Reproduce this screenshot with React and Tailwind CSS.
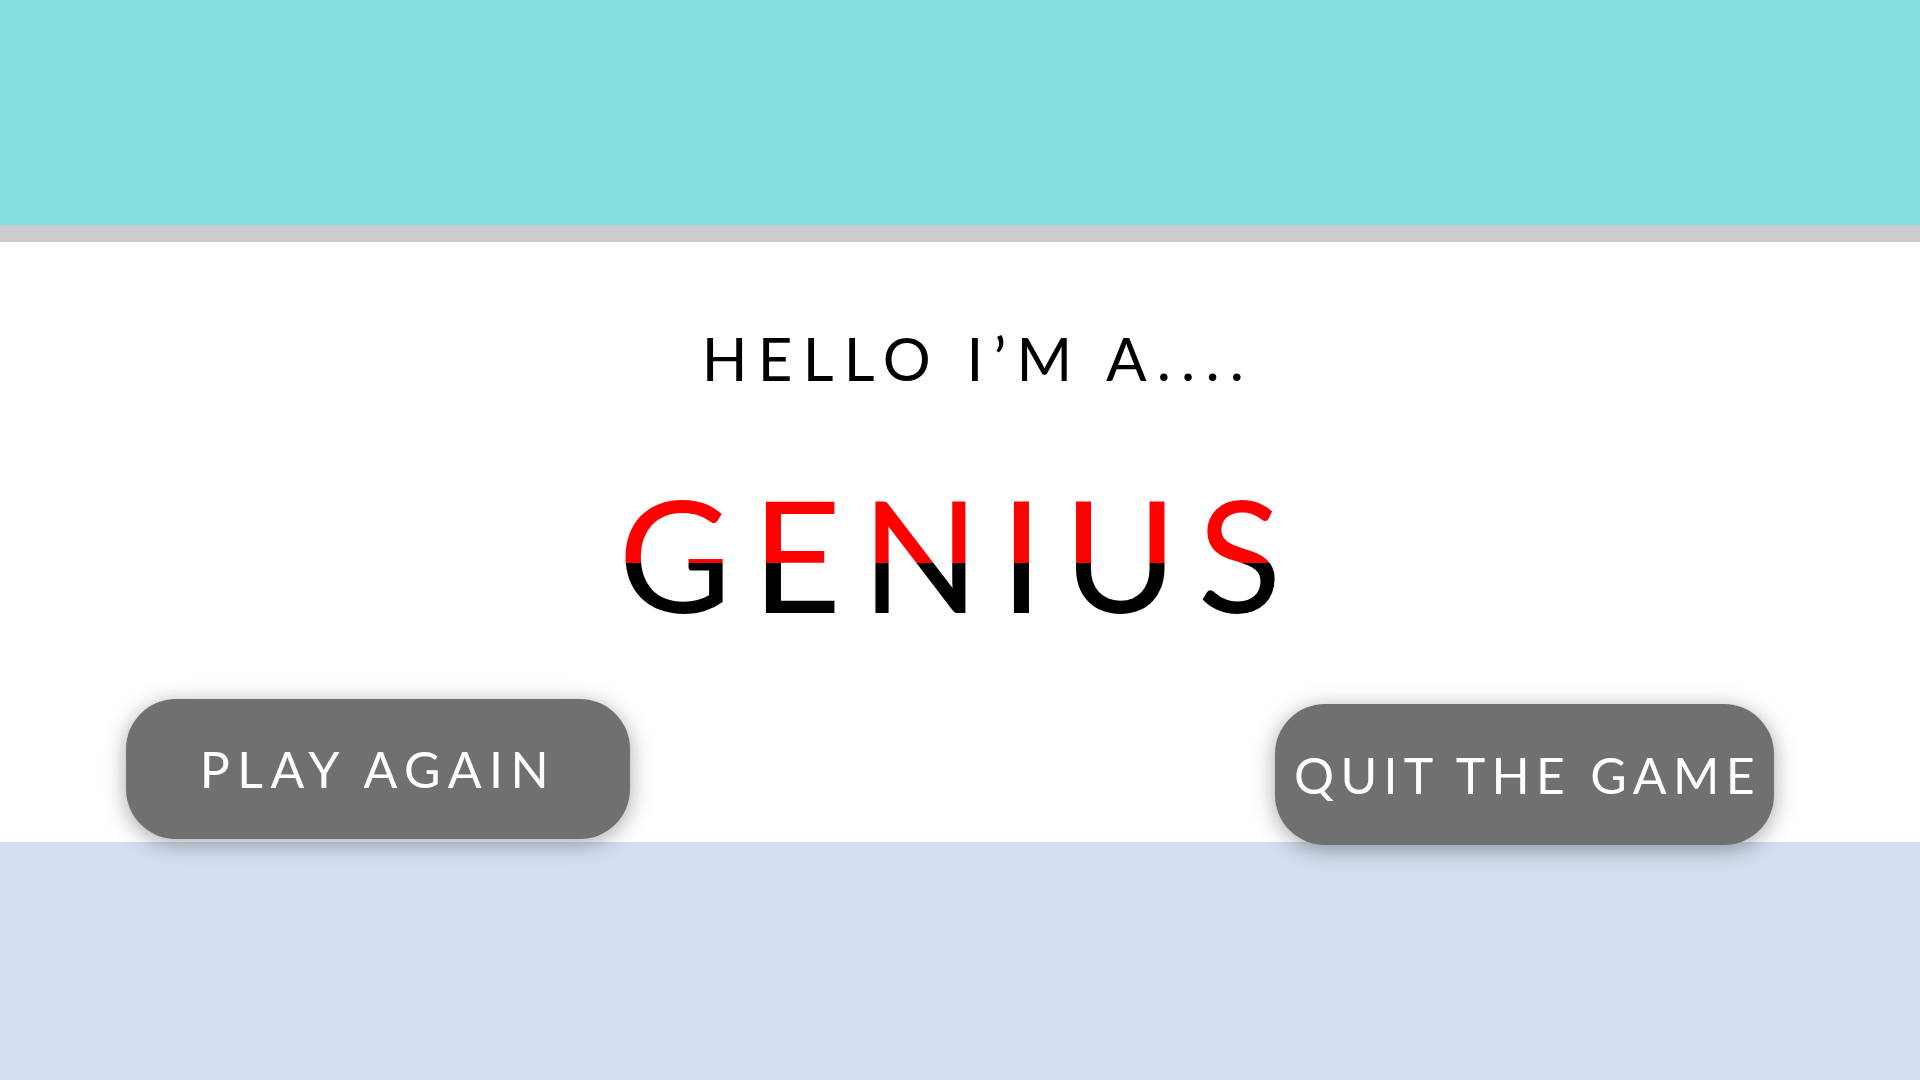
const App = () => {
   return (
      <div className="w-full h-screen flex flex-col overflow-hidden font-['Lato','Liberation_Sans',sans-serif]">
         <div className="h-[225px] bg-[#87dede]"></div>
         <div className="h-[17px] bg-[#cccccc]"></div>

         {/* main panel */}
         <div className="h-[600px] bg-white flex flex-col items-center pt-[86px]">
            <h3 className="text-[60px] leading-none font-normal text-black tracking-[0.17em] pl-[36px] whitespace-nowrap">HELLO I’M A....</h3>
            <h1 className="mt-[88px] w-fit text-[155px] leading-none font-normal tracking-[0.13em] bg-[linear-gradient(to_bottom,#ff0000_56.4%,#000000_56.4%)] bg-clip-text text-transparent">GENIUS</h1>
            <div className="relative z-10 w-full flex flex-row items-start justify-between pl-[126px] pr-[146px] mt-[68px]">
               <button className="w-[504px] h-[140px] rounded-[50px] bg-[#707070] text-white text-[50px] leading-none tracking-[0.15em] whitespace-nowrap shadow-[0_4px_22px_rgba(0,0,0,0.35)] cursor-pointer">PLAY AGAIN</button>
               <button className="mt-[5px] w-[499px] h-[141px] rounded-[50px] bg-[#707070] text-white text-[50px] leading-none tracking-[0.126em] pl-[6px] whitespace-nowrap shadow-[0_4px_22px_rgba(0,0,0,0.35)] cursor-pointer">QUIT THE GAME</button>
            </div>
         </div>

         <div className="flex-1 bg-[#d2dff0]"></div>
      </div>
   );
}

export default App;
